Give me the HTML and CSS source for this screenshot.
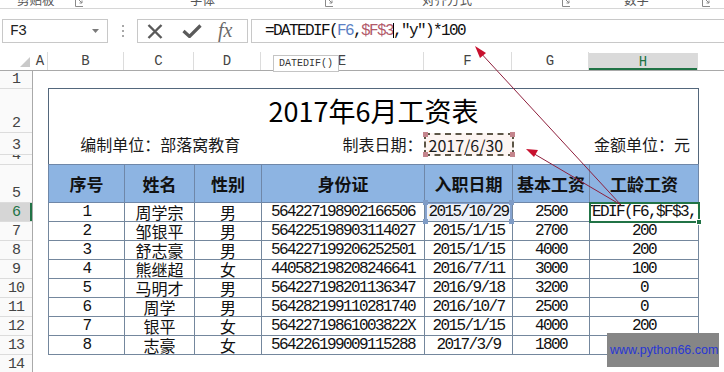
FILE: index.html
```html
<!DOCTYPE html>
<html lang="zh-CN">
  <head>
    <meta charset="utf-8">
    <title>2017年6月工资表</title>
    <link rel="stylesheet" href="styles.css">
  </head>

  <body>
    <div class="ribbon">
      <span class="lbl w1">剪贴板</span>
      <svg class="launch" width="8" height="8" viewBox="0 0 8 8"><path d="M0.5 0 V7.5 H8 M3 0 L7 4 M7 1.5 V4 H4.5" stroke="#8a8a8a" fill="none"/></svg>
      <span class="lbl w2">字体</span>
      <svg class="launch" width="8" height="8" viewBox="0 0 8 8"><path d="M0.5 0 V7.5 H8 M3 0 L7 4 M7 1.5 V4 H4.5" stroke="#8a8a8a" fill="none"/></svg>
      <span class="lbl w3">对齐方式</span>
      <svg class="launch" width="8" height="8" viewBox="0 0 8 8"><path d="M0.5 0 V7.5 H8 M3 0 L7 4 M7 1.5 V4 H4.5" stroke="#8a8a8a" fill="none"/></svg>
      <span class="lbl w4">数字</span>
      <svg class="launch" width="8" height="8" viewBox="0 0 8 8"><path d="M0.5 0 V7.5 H8 M3 0 L7 4 M7 1.5 V4 H4.5" stroke="#8a8a8a" fill="none"/></svg>
    </div>

    <div class="fbar">
      <div class="namebox">
        <span>F3</span>
        <svg width="7" height="4" viewBox="0 0 7 4"><path d="M0 0 H7 L3.5 4 Z" fill="#7a7a7a"/></svg>
      </div>
      <div class="grip"><i></i><i></i><i></i></div>
      <div class="fbtns">
        <svg class="ico-x" width="16" height="15" viewBox="0 0 16 15"><path d="M1.5 1 L14.5 14 M14.5 1 L1.5 14" stroke="#5a5a5a" stroke-width="2.4" fill="none"/></svg>
        <svg class="ico-ok" width="20" height="14" viewBox="0 0 20 14"><path d="M1.5 7 L7.5 12.5 L18.5 1.5" stroke="#5a5a5a" stroke-width="3.2" fill="none"/></svg>
        <span class="fx">fx</span>
      </div>
      <div class="finput">=DATEDIF(<span class="ref-b">F6</span>,<span class="ref-r">$F$3</span><span class="caret"></span>,"y")*100</div>
    </div>

    <div class="colheads">
      <div class="corner">
        <svg width="33" height="18" viewBox="0 0 33 18"><path d="M30 5 V15 H20 Z" fill="#c9c9c9"/></svg>
      </div>
      <div class="ch ca">A</div>
      <div class="ch cb">B</div>
      <div class="ch cc">C</div>
      <div class="ch cd">D</div>
      <div class="ch ce">E</div>
      <div class="ch cf">F</div>
      <div class="ch cg">G</div>
      <div class="ch chh sel">H</div>
      <div class="ch crest"></div>
    </div>

    <div class="sheet">
      <div class="rowheads">
        <div class="rh r1">1</div>
        <div class="rh r2">2</div>
        <div class="rh r3">3</div>
        <div class="rh r4">4</div>
        <div class="rh r5">5</div>
        <div class="rh rd sel">6</div>
        <div class="rh rd">7</div>
        <div class="rh rd">8</div>
        <div class="rh rd">9</div>
        <div class="rh rd">10</div>
        <div class="rh rd">11</div>
        <div class="rh rd">12</div>
        <div class="rh rd">13</div>
        <div class="rh rd">14</div>
      </div>

      <div class="cells">
        <table class="pay">
          <colgroup>
            <col style="width:76px"><col style="width:70px"><col style="width:67px"><col style="width:163px">
            <col style="width:88px"><col style="width:77px"><col style="width:109px">
          </colgroup>
          <tr class="t-title"><td colspan="7">2017年6月工资表</td></tr>
          <tr class="t-info">
            <td colspan="3" class="unit">编制单位：部落窝教育</td>
            <td class="made">制表日期：</td>
            <td class="date-cell">
              <div class="marquee">2017/6/30<i class="h tl"></i><i class="h tr"></i><i class="h bl"></i><i class="h br"></i></div>
            </td>
            <td></td>
            <td class="money">金额单位：元</td>
          </tr>
          <tr class="t-gap"><td colspan="7"></td></tr>
          <tr class="t-head">
            <td>序号</td><td>姓名</td><td>性别</td><td>身份证</td><td>入职日期</td><td>基本工资</td><td>工龄工资</td>
          </tr>
          <tr class="t-row">
            <td class="num">1</td><td>周学宗</td><td>男</td><td class="num">564227198902166506</td>
            <td class="num ref">2015/10/29<i class="rh1 tl"></i><i class="rh1 tr"></i><i class="rh1 bl"></i><i class="rh1 br"></i></td>
            <td class="num">2500</td>
            <td class="num active"><span class="edit">=DATEDIF(F6,$F$3,"y")*100</span><i class="fill"></i></td>
          </tr>
          <tr class="t-row"><td class="num">2</td><td>邹银平</td><td>男</td><td class="num">564225198903114027</td><td class="num">2015/1/15</td><td class="num">2700</td><td class="num">200</td></tr>
          <tr class="t-row"><td class="num">3</td><td>舒志豪</td><td>男</td><td class="num">564227199206252501</td><td class="num">2015/1/15</td><td class="num">4000</td><td class="num">200</td></tr>
          <tr class="t-row"><td class="num">4</td><td>熊继超</td><td>女</td><td class="num">440582198208246641</td><td class="num">2016/7/11</td><td class="num">3000</td><td class="num">100</td></tr>
          <tr class="t-row"><td class="num">5</td><td>马明才</td><td>男</td><td class="num">564227198201136347</td><td class="num">2016/9/18</td><td class="num">3200</td><td class="num">0</td></tr>
          <tr class="t-row"><td class="num">6</td><td>周学</td><td>男</td><td class="num">564282199110281740</td><td class="num">2016/10/7</td><td class="num">2500</td><td class="num">0</td></tr>
          <tr class="t-row"><td class="num">7</td><td>银平</td><td>女</td><td class="num">56422719861003822X</td><td class="num">2015/1/15</td><td class="num">4000</td><td class="num">200</td></tr>
          <tr class="t-row"><td class="num">8</td><td>志豪</td><td>女</td><td class="num">564226199009115288</td><td class="num">2017/3/9</td><td class="num">1800</td><td class="num"></td></tr>
        </table>
      </div>
    </div>

    <div class="tip">DATEDIF()</div>

    <svg class="arrows" width="724" height="372" viewBox="0 0 724 372">
      <line x1="621" y1="205" x2="478" y2="50" stroke="#8e1f3c" stroke-width="1"/>
      <path d="M475 46 L486 53 L480 58 Z" fill="#c8102e"/>
      <line x1="621" y1="205" x2="531" y2="152" stroke="#8e1f3c" stroke-width="1"/>
      <path d="M526 149 L538 150 L534 157 Z" fill="#c8102e"/>
    </svg>

    <div class="mark">www.python66.com</div>
  </body>
</html>
```

FILE: styles.css
```css
* {
    box-sizing: border-box;
}
body {
    margin: 0;
    width: 724px;
    height: 372px;
    overflow: hidden;
    position: relative;
    background: #fff;
    color: #000;
    font-family: "Noto Sans CJK SC", sans-serif;
}

/* ribbon remnants at the top */
.ribbon {
    display: flex;
    height: 9px;
    border-bottom: 1px solid #d6d6d6;
    overflow: hidden;
    color: #555;
    font-size: 12.5px;
    line-height: 14px;
}
.ribbon .lbl {
    margin-top: -7px;
    white-space: nowrap;
}
.ribbon .launch {
    flex: none;
    margin-top: -1px;
}
.w1 { margin-left: 17px; width: 58px; }
.w2 { margin-left: 107px; width: 135px; }
.w3 { margin-left: 89px; width: 140px; }
.w4 { margin-left: 54px; width: 78px; }

/* formula bar */
.fbar {
    display: flex;
    height: 43px;
    padding: 10px 0 9px 2px;
}
.namebox {
    width: 106px;
    height: 24px;
    border: 1px solid #c8c8c8;
    display: flex;
    align-items: center;
    justify-content: space-between;
    padding: 0 8px 0 7px;
    font: 15px "Liberation Mono", monospace;
    letter-spacing: -1px;
    color: #222;
}
.grip {
    width: 3px;
    margin: 0 12px 0 14px;
    display: flex;
    flex-direction: column;
    justify-content: center;
    gap: 3px;
}
.grip i {
    width: 2px;
    height: 2px;
    background: #a8a8a8;
}
.fbtns {
    width: 111px;
    height: 24px;
    border: 1px solid #c8c8c8;
    display: flex;
    align-items: center;
    padding-left: 9px;
}
.ico-ok {
    margin-left: 19px;
}
.fx {
    margin-left: 16px;
    font: italic 20px "Liberation Serif", serif;
    color: #6a6a6a;
    line-height: 20px;
    margin-top: -2px;
}
.finput {
    flex: 1;
    height: 24px;
    margin-left: 3px;
    border: 1px solid #c8c8c8;
    border-right: none;
    padding-left: 13px;
    font: 16px/22px "Liberation Mono", monospace;
    letter-spacing: -1.6px;
    white-space: nowrap;
    color: #111;
}
.ref-b { color: #5b7fc4; }
.ref-r { color: #b25a6a; }
.caret {
    display: inline-block;
    width: 1px;
    height: 15px;
    background: #000;
    vertical-align: -3px;
    margin-right: -1px;
}

/* column headers */
.colheads {
    display: flex;
    height: 19px;
    border-bottom: 1px solid #a9a9a9;
    font: 14px/18px "Liberation Mono", monospace;
    color: #444;
}
.corner {
    width: 33px;
    flex: none;
}
.corner svg { display: block; }
.ch {
    flex: none;
    border-right: 1px solid #dcdcdc;
    text-align: center;
}
.ca { width: 15px; }
.cb { width: 76px; }
.cc { width: 70px; }
.cd { width: 67px; }
.ce { width: 163px; }
.cf { width: 88px; }
.cg { width: 77px; }
.chh { width: 109px; }
.crest { flex: 1; border-right: none; }
.ch.sel {
    background: #dadada;
    color: #217346;
    box-shadow: inset 0 -2px 0 #217346;
    margin-top: 1px;
}

/* sheet */
.sheet {
    display: flex;
}
.rowheads {
    width: 33px;
    flex: none;
    border-right: 1px solid #a9a9a9;
    background: #fafafa;
}
.rh {
    display: flex;
    align-items: flex-end;
    justify-content: center;
    overflow: hidden;
    border-bottom: 1px solid #dcdcdc;
    font: 15px/16px "Liberation Mono", monospace;
    letter-spacing: -1px;
    color: #444;
}
.r1 { height: 18px; }
.r2 { height: 44px; }
.r3 { height: 22px; }
.r4 { height: 10px; }
.r5 { height: 38px; }
.rd { height: 19px; }
.rh.sel {
    background: #d6d6d6;
    box-shadow: inset -2px 0 0 #217346;
    color: #217346;
}

.cells {
    flex: 1;
    padding: 17px 0 0 15px;
}
.pay {
    border-collapse: collapse;
    table-layout: fixed;
    width: 650px;
    border: 1px solid #54677c;
}
.pay td {
    padding: 0;
    text-align: center;
    white-space: nowrap;
    overflow: hidden;
}
.t-title td {
    height: 44px;
    font-size: 27px;
    line-height: 30px;
    vertical-align: bottom;
    padding-bottom: 7px;
}
.t-info td {
    height: 23px;
    font-size: 16px;
    line-height: 20px;
    vertical-align: middle;
    color: #1a1a1a;
}
.unit { padding-left: 10px !important; }
.made { text-align: right !important; padding-right: 2px !important; }
.money { text-align: right !important; padding-right: 8px !important; }
.date-cell {
    overflow: visible !important;
    position: relative;
}
.marquee {
    height: 23px;
    margin: 0 -1px;
    border: 2px dashed #5c5646;
    background: #fcf5f2;
    text-align: left;
    padding-left: 3px;
    position: relative;
}
.h {
    position: absolute;
    width: 5px;
    height: 5px;
    background: #c4858d;
}
.h.tl { left: -3px; top: -3px; }
.h.tr { right: -3px; top: -3px; }
.h.bl { left: -3px; bottom: -3px; }
.h.br { right: -3px; bottom: -3px; }
.t-gap td {
    height: 9px;
}
.t-head td {
    height: 38px;
    background: #8db4e2;
    border: 1px solid #6f87a8;
    font-size: 17px;
    font-weight: bold;
    vertical-align: middle;
    color: #111;
}
.t-row td {
    height: 19px;
    border: 1px solid #74879d;
    font-size: 16px;
    line-height: 17px;
    vertical-align: middle;
    color: #111;
}
.t-row td.num {
    font-family: "Liberation Mono", "Noto Sans CJK SC", monospace;
    letter-spacing: -1.6px;
}
.t-row td.ref {
    position: relative;
    overflow: visible;
    background: #edf1f9;
    box-shadow: inset 2px 0 0 #86a3cf, inset -2px 0 0 #86a3cf, inset 0 1px 0 #86a3cf;
}
.rh1 {
    position: absolute;
    width: 5px;
    height: 5px;
    background: #7f9cc6;
}
.rh1.tl { left: -2px; top: -3px; }
.rh1.tr { right: -2px; top: -3px; }
.rh1.bl { left: -2px; bottom: -3px; }
.rh1.br { right: -2px; bottom: -3px; }
.t-row td.active {
    position: relative;
    text-align: left;
    outline: 2px solid #217346;
    outline-offset: -1px;
    overflow: visible;
}
.edit {
    display: block;
    overflow: hidden;
    padding-left: 2px;
    text-indent: -32px;
    width: 108px;
}
.fill {
    position: absolute;
    right: -4px;
    bottom: -4px;
    width: 6px;
    height: 6px;
    background: #217346;
    border: 1px solid #fff;
}

/* overlays */
.tip {
    position: absolute;
    left: 273px;
    top: 55px;
    width: 66px;
    height: 17px;
    border: 1px solid #c4c4c4;
    background: #fff;
    font: 10px/15px "Liberation Mono", monospace;
    color: #333;
    padding-left: 5px;
}
.arrows {
    position: absolute;
    left: 0;
    top: 0;
    pointer-events: none;
}
.mark {
    position: absolute;
    left: 607px;
    top: 333px;
    width: 112px;
    height: 34px;
    background: #868686;
    color: #2836d4;
    font: 12.5px/34px "Liberation Sans", sans-serif;
    padding-left: 3px;
}
```
